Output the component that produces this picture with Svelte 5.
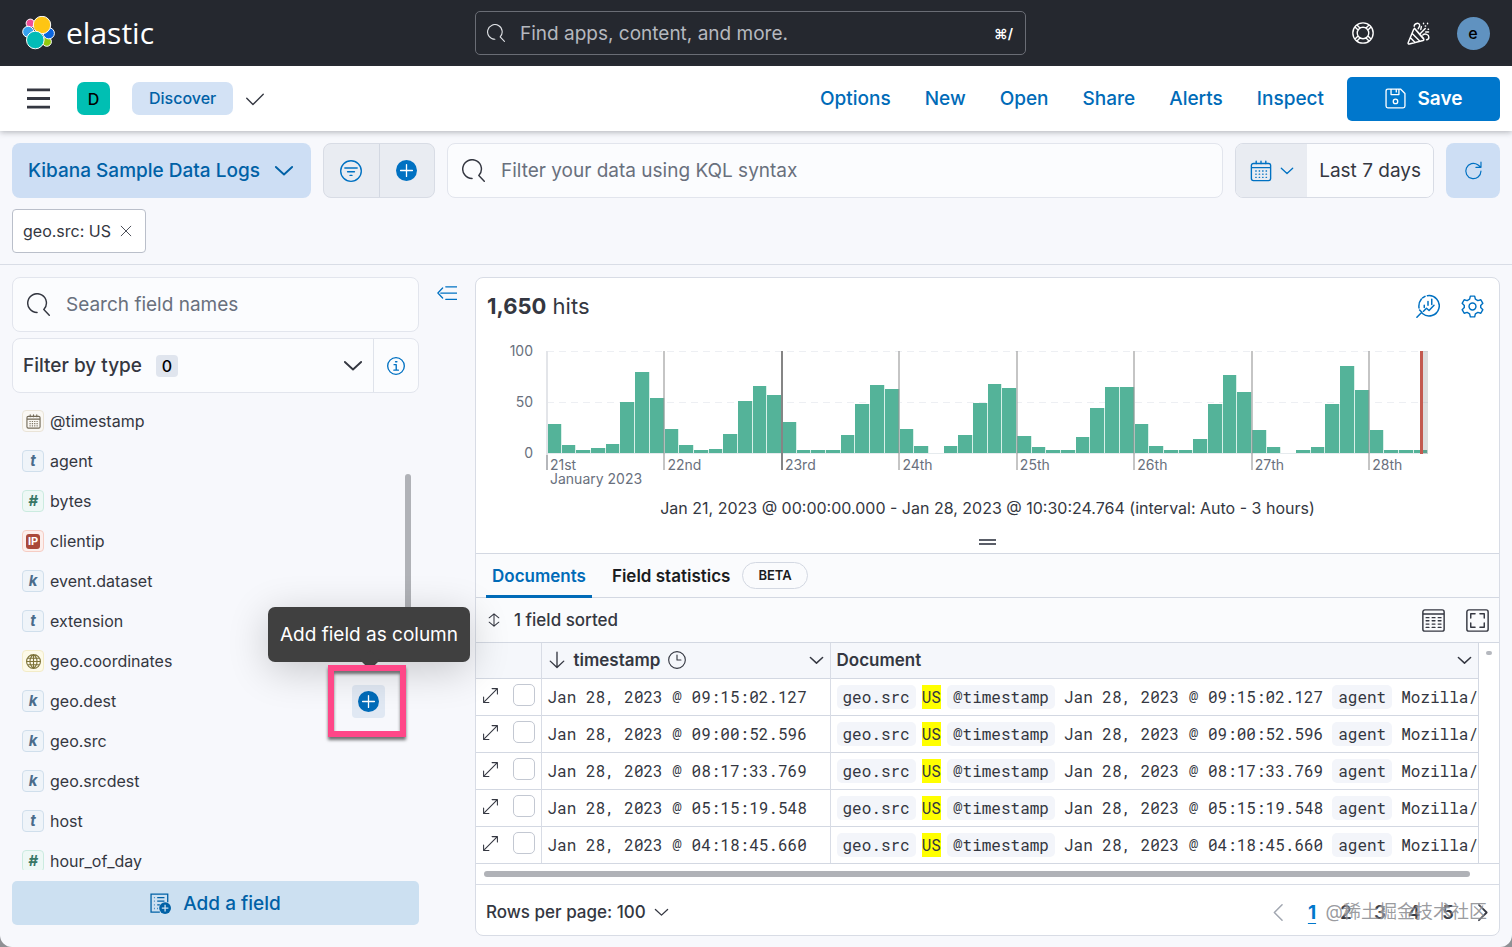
<script lang="ts">
  type Field = { name: string; type: 'date' | 'text' | 'number' | 'ip' | 'keyword' | 'geo' }

  const navLinks = ['Options', 'New', 'Open', 'Share', 'Alerts', 'Inspect']

  const fields: Field[] = [
    { name: '@timestamp', type: 'date' },
    { name: 'agent', type: 'text' },
    { name: 'bytes', type: 'number' },
    { name: 'clientip', type: 'ip' },
    { name: 'event.dataset', type: 'keyword' },
    { name: 'extension', type: 'text' },
    { name: 'geo.coordinates', type: 'geo' },
    { name: 'geo.dest', type: 'keyword' },
    { name: 'geo.src', type: 'keyword' },
    { name: 'geo.srcdest', type: 'keyword' },
    { name: 'host', type: 'text' },
    { name: 'hour_of_day', type: 'number' },
  ]
  const tokens: Record<string, string> = { text: 't', number: '#', keyword: 'k', ip: 'IP' }

  // One value per 3 hour bucket, 8 buckets per day.
  const buckets = [
    28, 8, 3, 5, 9, 50, 79, 54,
    24, 8, 3, 4, 19, 51, 66, 57,
    30, 3, 3, 3, 18, 48, 67, 63,
    24, 7, 0, 7, 18, 49, 68, 64,
    17, 6, 3, 3, 16, 44, 65, 65,
    28, 7, 3, 3, 14, 48, 76, 60,
    23, 6, 0, 3, 6, 48, 85, 62,
    23, 3, 3, 3,
  ]
  const days = ['21st', '22nd', '23rd', '24th', '25th', '26th', '27th', '28th']

  const rows = [
    'Jan 28, 2023 @ 09:15:02.127',
    'Jan 28, 2023 @ 09:00:52.596',
    'Jan 28, 2023 @ 08:17:33.769',
    'Jan 28, 2023 @ 05:15:19.548',
    'Jan 28, 2023 @ 04:18:45.660',
  ]

  let hovered = $state('geo.dest')
  let tab = $state('documents')
  let page = $state(1)

  // Stroked outlines on a 16x16 grid.
  const icons: Record<string, string> = {
    search: 'M7 13.5A6.5 6.5 0 1 1 11.7 11.5M11.7 11.5L15.5 15.5',
    menu: 'M0 2h16M0 8h16M0 14h16',
    check: 'M2 7.5l4.5 4.5L14 4.5',
    down: 'M1.5 4.8L8 10.8l6.5-6',
    left: 'M11 1.5L4.5 8l6.5 6.5',
    right: 'M5 1.5L11.5 8 5 14.5',
    cross: 'M2.5 2.5l11 11M13.5 2.5l-11 11',
    filter: 'M.5 8a7.5 7.5 0 1 0 15 0 7.5 7.5 0 1 0-15 0M3.5 5.8h9M5.5 8.5h5M7.3 11.2h1.4',
    calendar: 'M2.5 2.5h11a1.5 1.5 0 0 1 1.5 1.5v9.5a1.5 1.5 0 0 1-1.5 1.5h-11A1.5 1.5 0 0 1 1 13.5V4a1.5 1.5 0 0 1 1.5-1.5zM1 5.5h14M4.5.8v2M8 .8v2M11.5.8v2M4.2 8h.3M6.7 8h.3M9.200 8h.3M11.700 8h.3M4.200 10.300h.3M6.700 10.300h.3M9.200 10.300h.3M11.700 10.300h.3M4.200 12.600h.3M6.700 12.600h.3M9.200 12.600h.3M11.700 12.600h.3',
    refresh: 'M14.3 8.5A6.4 6.4 0 1 1 11.6 3.2L14 5M14.3 1v4.3H10',
    help: 'M.6 8a7.4 7.4 0 1 0 14.8 0A7.4 7.4 0 1 0 .6 8M3.8 8a4.2 4.2 0 1 0 8.4 0 4.2 4.2 0 1 0-8.4 0M2.2 3.6l2.2 2.2M3.6 2.2l2.2 2.2M13.8 3.6l-2.2 2.2M12.4 2.2l-2.2 2.2M2.2 12.4l2.2-2.2M3.6 13.8l2.2-2.2M13.8 12.4l-2.2-2.2M12.4 13.8l-2.2-2.2',
    cheer: 'M4.6 5.2L.8 14.4c-.2.6.2 1 .8.9l9.6-2.4c.6-.2.7-.7.3-1.1L5.7 5c-.4-.4-.9-.3-1.1.2zM3.6 8l5.2 5.2M2.4 11l3.2 3.2M5.2 4.4l6.4 7M5 3c0-2 3.400-3 3.800-.9.2 1-.6 1.600-1 2.600M9.500 7.800l3.200-3.200M9.600 5.200l.400-2M11 9c1.500-1.200 4.200-.4 4.200 1.600 0 1.200-.8 1.700-1.600 1.700M11.500.9v.3M14.300.9v.3M12.700 2.800h.3M14.700 5h.3M13 6.900h2',
    save: 'M2.200.8h9.600l3.400 3.400v9.600a1.400 1.400 0 0 1-1.400 1.400H2.200A1.400 1.400 0 0 1 .8 13.800V2.200A1.400 1.400 0 0 1 2.200.8zM4.600 1v4h6V1M8.600 1v2M6.300 10.200a1.700 1.700 0 1 0 3.400 0 1.700 1.700 0 1 0-3.400 0',
    lens: 'M7.600 1.100A6.800 6.800 0 1 1 4.300 13M.6 15.500L3.900 12.200 2.400 10.700M2 9.300c-.3-2.200.2-4.200 1.600-5.900M4.400 2.600L6 1.600M5.500 7.500V9M8 5v2.500M10.500 3.500V7M5 11.500l2-2 1.700 1.500 3.300-3.500',
    gear: 'M6.500.8h3l.5 2.100 1.700 1 2.100-.6 1.400 2.500L13.700 7.300v1.400l1.500 1.500-1.400 2.500-2.100-.6-1.700 1-.5 2.100h-3L6 13.100l-1.700-1-2.100.6L.8 10.200 2.300 8.700V7.300L.8 5.800l1.400-2.500 2.100.6 1.700-1zM5.600 8a2.400 2.400 0 1 0 4.800 0 2.400 2.400 0 1 0-4.800 0',
    info: 'M.6 8a7.400 7.400 0 1 0 14.800 0A7.400 7.400 0 1 0 .6 8M6.300 6.800h1.900v4.700M6.100 11.700h4M7.600 4.200h1.200',
    collapse: 'M7 3h9M3 8h13M7 13h9M4.500 4L.7 8l3.800 4',
    expand: 'M2.500 13.500l11-11M9.500 1.500h5v5M1.500 9.500v5h5',
    sortable: 'M8 1v14M2.500 5.500L8 1l5.500 4.500M2.500 10.500L8 15l5.500-4.500',
    sortDown: 'M8 1v13.500M2 9l6 5.700L14 9',
    clock: 'M.6 8a7.400 7.400 0 1 0 14.800 0A7.400 7.400 0 1 0 .6 8M8 3.500V8h3.500',
    table: 'M2 .6h12A1.400 1.400 0 0 1 15.400 2v12a1.400 1.400 0 0 1-1.400 1.400H2A1.400 1.400 0 0 1 .6 14V2A1.400 1.400 0 0 1 2 .6zM.6 3.500h14.800M2.900 6h1.900M7.100 6h1.900M11.300 6h1.900M2.900 8.200h1.900M7.100 8.200h1.900M11.300 8.200h1.900M2.900 10.500h1.900M7.100 10.500h1.900M11.300 10.500h1.900M2.900 12.800h1.900M7.100 12.800h1.900M11.300 12.800h1.900',
    full: 'M2 .6h12A1.400 1.400 0 0 1 15.400 2v12a1.400 1.400 0 0 1-1.400 1.400H2A1.400 1.400 0 0 1 .6 14V2A1.400 1.400 0 0 1 2 .6zM3.300 6.300v-3h3M9.700 3.300h3v3M12.700 9.700v3h-3M6.300 12.700h-3v-3',
    globe: 'M.6 8a7.400 7.400 0 1 0 14.800 0A7.400 7.400 0 1 0 .6 8M8 .6v14.800M.6 8h14.800M1.800 4.500h12.400M1.800 11.500h12.400M8 .6C3 4.500 3 11.500 8 15.400M8 .6c5 3.900 5 10.900 0 14.800',
    indexAdd: 'M7.500 14.500h-6.700V.8h12.700V7M3 3.500h.5M5.500 3.500h5.500M3 6.200h.5M5.500 6.200H11M3 9h.5M5.500 9h2M3 11.800h.5M5.500 11.800h.5',
  }
</script>

{#snippet icon(name: string, size = 22, weight = 1)}
  <svg width={size} height={size} viewBox="0 0 16 16" fill="none" stroke="currentColor" stroke-width={weight} stroke-linecap="round" stroke-linejoin="round" aria-hidden="true">
    <path d={icons[name]} />
  </svg>
{/snippet}

{#snippet plus(size = 21)}
  <svg width={size} height={size} viewBox="0 0 16 16" aria-hidden="true">
    <circle cx="8" cy="8" r="8" fill="currentColor" />
    <path d="M8 3.500v9M3.500 8h9" stroke="#fff" stroke-width="1" stroke-linecap="round" />
  </svg>
{/snippet}

<div class="app">
  <header class="top">
    <a class="brand" href="#home">
      <svg width="33" height="34" viewBox="0 0 33 34" aria-hidden="true">
        <g stroke="#fff" stroke-width="1">
          <circle cx="8.300" cy="7.300" r="4.200" fill="#f04e98" />
          <circle cx="24.800" cy="25.700" r="4.600" fill="#93c90e" />
          <circle cx="6.200" cy="15.800" r="5.500" fill="#36a2ef" />
          <circle cx="26.800" cy="17.300" r="5.600" fill="#0b64dd" />
          <circle cx="20" cy="9" r="8.700" fill="#fec514" />
          <circle cx="13.300" cy="24" r="8.800" fill="#02bcb7" />
        </g>
      </svg>
      <span>elastic</span>
    </a>
    <label class="find">
      {@render icon('search', 18)}
      <input type="text" placeholder="Find apps, content, and more." aria-label="Find apps, content, and more." />
      <kbd>⌘/</kbd>
    </label>
    <div class="top-right">
      <button aria-label="Help">{@render icon('help')}</button>
      <button aria-label="News">{@render icon('cheer', 23)}</button>
      <button aria-label="Account"><span class="avatar">e</span></button>
    </div>
  </header>

  <nav class="bar">
    <button class="plain" aria-label="Menu">{@render icon('menu', 23, 2)}</button>
    <button class="space">D</button>
    <a class="crumb" href="#discover">Discover</a>
    <span class="check">{@render icon('check')}</span>
    <div class="links">
      {#each navLinks as link}
        <a href="#{link.toLowerCase()}">{link}</a>
      {/each}
    </div>
    <button class="save">{@render icon('save', 21)} Save</button>
  </nav>

  <section class="query">
    <div class="query-row">
      <button class="dataview">Kibana Sample Data Logs {@render icon('down', 20, 1.500)}</button>
      <div class="group">
        <button aria-label="Saved queries">{@render icon('filter')}</button>
        <button aria-label="Add filter">{@render plus()}</button>
      </div>
      <label class="field kql">
        {@render icon('search', 23)}
        <input type="text" placeholder="Filter your data using KQL syntax" aria-label="Query" />
      </label>
      <div class="dates">
        <button class="quick" aria-label="Quick select">{@render icon('calendar')} {@render icon('down', 14, 1.500)}</button>
        <button class="range">Last 7 days</button>
      </div>
      <button class="refresh" aria-label="Refresh">{@render icon('refresh', 19)}</button>
    </div>
    <button class="chip">geo.src: US {@render icon('cross', 14)}</button>
  </section>

  <div class="body">
    <aside>
      <label class="field">
        {@render icon('search', 23)}
        <input type="text" placeholder="Search field names" aria-label="Search field names" />
      </label>
      <div class="types">
        <button class="type-btn">Filter by type <span class="count">0</span> {@render icon('down', 20, 1.500)}</button>
        <button class="type-info" aria-label="Field type help">{@render icon('info', 18, 1.200)}</button>
      </div>
      <ul class="fields">
        {#each fields as field}
          <li>
            <span class="token {field.type}">
              {#if field.type === 'date'}
                {@render icon('calendar', 15, 1.200)}
              {:else if field.type === 'geo'}
                {@render icon('globe', 15, 1.200)}
              {:else}
                <span>{tokens[field.type]}</span>
              {/if}
            </span>
            {field.name}
            {#if hovered === field.name}
              <span class="action">
                <button aria-label="Add field as column">{@render plus()}</button>
                <span class="tooltip" role="tooltip">Add field as column</span>
                <span class="marker"></span>
              </span>
            {/if}
          </li>
        {/each}
        <span class="thumb"></span>
      </ul>
      <button class="add">
        <svg width="21" height="21" viewBox="0 0 16 16" fill="none" stroke="currentColor" aria-hidden="true">
          <path d={icons.indexAdd} />
          <circle cx="11.500" cy="11.500" r="4.500" fill="currentColor" stroke="none" />
          <path d="M11.500 9v5M9 11.500h5" stroke="#cce0f1" />
        </svg>
        Add a field
      </button>
    </aside>

    <button class="collapse" aria-label="Collapse sidebar">{@render icon('collapse', 20)}</button>

    <main>
      <section class="hist">
        <div class="hist-head">
          <h1><strong>1,650</strong> hits</h1>
          <button aria-label="Edit visualization">{@render icon('lens', 24)}</button>
          <button aria-label="Chart options">{@render icon('gear', 23)}</button>
        </div>
        <div class="chart">
          <div class="y-axis"><span>100</span><span>50</span><span>0</span></div>
          <div class="plot">
            <div class="bars">
              {#each buckets as value}
                <i style:height="{value}%"></i>
              {/each}
            </div>
            <span class="rest"></span>
            <span class="now"></span>
            {#each days as day, i}
              <div class="day" class:first={i === 0} class:dark={i === 2} style:left="{(i * 800) / buckets.length}%">
                <span>{day}{#if i === 0}<br />January 2023{/if}</span>
              </div>
            {/each}
          </div>
        </div>
        <p class="interval">Jan 21, 2023 @ 00:00:00.000 - Jan 28, 2023 @ 10:30:24.764 (interval: Auto - 3 hours)</p>
        <button class="grip" aria-label="Resize chart"></button>
      </section>

      <div class="tabs">
        <button class:active={tab === 'documents'} onclick={() => (tab = 'documents')}>Documents</button>
        <button class:active={tab === 'stats'} onclick={() => (tab = 'stats')}>Field statistics</button>
        <span class="beta">BETA</span>
      </div>

      <div class="toolbar">
        <button class="sorted">{@render icon('sortable', 14, 1.200)} 1 field sorted</button>
        <button class="tool" aria-label="Display options">{@render icon('table', 23)}</button>
        <button class="tool" aria-label="Full screen">{@render icon('full', 23)}</button>
      </div>

      <div class="grid">
        <table>
          <thead>
            <tr>
              <th class="ctl"></th>
              <th class="ts"><div>{@render icon('sortDown', 18, 1.200)} <span>timestamp</span> {@render icon('clock', 18)} <span class="end">{@render icon('down', 15, 1.600)}</span></div></th>
              <th><div>Document <span class="end">{@render icon('down', 15, 1.600)}</span></div></th>
            </tr>
          </thead>
          <tbody>
            {#each rows as time}
              <tr>
                <td class="ctl">
                  <div>
                    <button class="plain" aria-label="Open document">{@render icon('expand', 17)}</button>
                    <input type="checkbox" aria-label="Select {time}" />
                  </div>
                </td>
                <td class="mono">{time}</td>
                <td class="mono">
                  <div class="source">
                    <b>geo.src</b><mark>US</mark><b>@timestamp</b><span>{time}</span><b>agent</b><span>Mozilla/</span>
                  </div>
                </td>
              </tr>
            {/each}
          </tbody>
        </table>
        <div class="gutter"><span></span></div>
      </div>
      <div class="hscroll"><span></span></div>

      <footer>
        <button class="per-page">Rows per page: 100 {@render icon('down', 15, 1.400)}</button>
        <div class="pages">
          <button class="prev" aria-label="Previous page">{@render icon('left', 19, 1.300)}</button>
          {#each [1, 2, 3, 4, 5] as n}
            <button class:active={page === n} onclick={() => (page = n)}>{n}</button>
          {/each}
          <button aria-label="Next page">{@render icon('right', 19, 1.500)}</button>
        </div>
        <span class="watermark">@稀土掘金技术社区</span>
      </footer>
    </main>
  </div>
</div>

<style>
  :global(body) { background: #8f9094; }

  .app {
    display: flex;
    flex-direction: column;
    height: 100vh;
    overflow: hidden;
    border-radius: 0 0 12px 12px;
    background: #f7f8fc;
    color: #343741;
    font-family: Inter, "Liberation Sans", sans-serif;
    font-size: 19px;
  }
  .app * { box-sizing: border-box; }
  svg { display: block; flex: none; }
  button, input { font: inherit; color: inherit; }
  button {
    display: flex;
    align-items: center;
    justify-content: center;
    padding: 0;
    border: 0;
    background: none;
    cursor: pointer;
    white-space: nowrap;
  }
  input[type='text'] {
    flex: 1;
    min-width: 0;
    padding: 0;
    border: 0;
    outline: 0;
    background: none;
  }
  input::placeholder { color: #69707d; opacity: 1; }
  a { text-decoration: none; }

  .top {
    display: grid;
    grid-template-columns: 453fr 551fr 469fr;
    align-items: center;
    flex: none;
    height: 66px;
    padding: 0 17px 0 22px;
    background: #25282f;
    color: #fff;
  }
  .brand {
    display: flex;
    align-items: center;
    gap: 11px;
    color: #fff;
    font: 30px/40px "Open Sans", "Noto Sans", sans-serif;
  }
  .find {
    display: flex;
    align-items: center;
    gap: 15px;
    height: 44px;
    padding: 0 12px 0 11px;
    border: 1px solid #6a6d75;
    border-radius: 5px;
    color: #dfe1e5;
  }
  .find input::placeholder { color: #b5b8bf; }
  .find kbd { color: #fff; font: 600 14px Inter, "DejaVu Sans", sans-serif; }
  .top-right { display: flex; justify-content: flex-end; gap: 11px; }
  .top-right button { width: 44px; height: 44px; }
  .avatar {
    width: 33px;
    height: 33px;
    border-radius: 50%;
    background: #6092c0;
    color: #000;
    font-size: 16px;
    font-weight: 500;
    line-height: 33px;
  }

  .bar {
    position: relative;
    display: flex;
    align-items: center;
    flex: none;
    height: 65px;
    padding: 0 12px 0 27px;
    background: #fff;
    box-shadow: 0 1px 6px rgba(60, 64, 75, 0.4);
  }
  .space {
    width: 33px;
    height: 33px;
    margin: 0 22px 0 27px;
    border-radius: 7px;
    background: #00bfb3;
    color: #000;
    font-size: 16px;
    font-weight: 500;
  }
  .crumb {
    padding: 0 17px;
    border-radius: 7px;
    background: #d3e2f5;
    color: #0061a6;
    font-size: 16px;
    font-weight: 500;
    line-height: 33px;
  }
  .check { margin-left: 11px; }
  .links { display: flex; gap: 34px; margin: 0 23px 0 auto; }
  .links a { color: #006bb8; font-weight: 500; }
  .save {
    gap: 12px;
    width: 153px;
    height: 44px;
    border-radius: 5px;
    background: #0077cc;
    color: #fff;
    font-weight: 600;
  }

  .query {
    flex: none;
    padding: 12px 12px 11px;
    border-bottom: 1px solid #d9dde6;
  }
  .query-row { display: flex; gap: 12px; height: 55px; margin-bottom: 11px; }
  .dataview {
    gap: 14px;
    padding: 0 17px 0 16px;
    border-radius: 8px;
    background: #cddef4;
    color: #0061a6;
    font-weight: 500;
  }
  .group, .dates, .types {
    display: flex;
    border: 1px solid #d8dce5;
    border-radius: 8px;
    overflow: hidden;
  }
  .group { background: #e9ecf2; color: #0071c2; }
  .group button { width: 55px; }
  .group button + button { border-left: 1px solid #d3d8e2; }
  .field {
    display: flex;
    align-items: center;
    gap: 16px;
    height: 55px;
    padding: 0 14px;
    border: 1px solid #e2e5ed;
    border-radius: 8px;
    background: #fbfcfe;
  }
  .kql { flex: 1; }
  .quick { gap: 8px; width: 71px; background: #e9ecf2; color: #0071c2; }
  .range { padding: 0 12px; background: #fbfcfe; }
  .refresh { width: 54px; border-radius: 8px; background: #cddef4; color: #0071c2; }
  .chip {
    gap: 8px;
    height: 44px;
    padding: 0 12px 0 10px;
    border: 1px solid #babfca;
    border-radius: 4px;
    background: #fff;
    font-size: 16px;
  }

  .body {
    display: flex;
    flex: 1;
    min-height: 0;
    padding: 12px 12px 11px;
  }
  aside { display: flex; flex-direction: column; flex: 0 0 407px; padding-bottom: 11px; }
  .types { flex: none; height: 55px; margin-top: 6px; background: #fbfcfe; border-color: #e2e5ed; }
  .type-btn { flex: 1; justify-content: flex-start; padding: 0 10px; font-weight: 500; }
  .type-btn > :global(svg) { margin-left: auto; }
  .count {
    width: 22px;
    margin-left: 14px;
    border-radius: 4px;
    background: #e0e5ee;
    color: #000;
    font-size: 16px;
    line-height: 22px;
  }
  .type-info { width: 45px; border-left: 1px solid #dfe3eb; color: #0071c2; }
  .fields {
    position: relative;
    flex: 1;
    min-height: 0;
    margin: 8px 0 11px;
    padding: 0 0 0 10px;
    overflow-y: clip;
    list-style: none;
    font-size: 16px;
  }
  .fields li { display: flex; align-items: center; gap: 6px; height: 40px; }
  .token {
    display: flex;
    align-items: center;
    justify-content: center;
    width: 22px;
    height: 22px;
    border: 1px solid;
    border-radius: 4px;
    font-size: 15px;
    font-weight: 700;
    font-style: italic;
    line-height: 20px;
  }
  .token.text, .token.keyword { border-color: #d0dfec; background: #eff4f9; color: #496c8c; }
  .token.number { border-color: #cbebe0; background: #eef8f5; color: #387765; }
  .token.ip { border-color: #f6cdc4; background: #fcefec; color: #fff; font-size: 11px; font-style: normal; }
  .token.ip span { padding: 0 2px; border-radius: 3px; background: #aa493a; line-height: 15px; }
  .token.date { border-color: #eae4d8; background: #faf8f4; color: #736a58; }
  .token.geo { border-color: #f3ecc8; background: #fdfae8; color: #7d7338; }
  .action { position: relative; margin: 0 34px 0 auto; }
  .action button { width: 33px; height: 33px; border-radius: 4px; background: #e0e8f3; color: #006bb8; }
  .tooltip {
    position: absolute;
    right: -85px;
    bottom: 56px;
    padding: 0 12px;
    border-radius: 7px;
    background: #404040;
    box-shadow: 0 8px 40px rgba(0, 0, 0, 0.2);
    color: #fff;
    font-size: 19px;
    line-height: 55px;
    white-space: nowrap;
  }
  .tooltip::after {
    content: '';
    position: absolute;
    right: 93px;
    bottom: -5px;
    width: 14px;
    height: 14px;
    border-radius: 2px;
    background: #404040;
    transform: rotate(45deg);
  }
  .marker {
    position: absolute;
    inset: -20px -21px -19px -24px;
    border: 6px solid #ff4788;
    box-shadow: 0 3px 3px rgba(0, 0, 0, 0.55), inset 0 3px 3px rgba(0, 0, 0, 0.5);
    pointer-events: none;
  }
  .fields .thumb {
    position: absolute;
    top: 73px;
    right: 8px;
    width: 6px;
    height: 150px;
    border-radius: 3px;
    background: #b0b2b7;
  }
  .fields li { position: relative; }
  .fields li:has(.action) { z-index: 2; }
  .add {
    flex: none;
    gap: 12px;
    height: 44px;
    border-radius: 5px;
    background: #cce0f1;
    color: #0061a6;
    font-weight: 500;
  }
  .collapse { width: 56px; height: 32px; flex: none; color: #0071c2; }

  main {
    display: flex;
    flex-direction: column;
    flex: 1;
    min-width: 0;
    border: 1px solid #d8dce5;
    border-radius: 8px;
    background: #fff;
    overflow: hidden;
  }
  .hist { position: relative; flex: none; height: 276px; border-bottom: 1px solid #d3d8e2; }
  .hist-head { display: flex; align-items: center; height: 56px; padding: 0 5px 0 11px; }
  .hist-head h1 { margin: 0 auto 0 0; font-size: 22px; font-weight: 400; }
  .hist-head button { width: 44px; color: #0071c2; }
  .chart {
    display: flex;
    height: 145px;
    padding: 17px 71px 0 0;
    color: #69707d;
    font-size: 14px;
    line-height: 14px;
  }
  .y-axis {
    display: flex;
    flex-direction: column;
    justify-content: space-between;
    flex: 0 0 71px;
    height: 116px;
    margin-top: -7px;
    padding-right: 14px;
    text-align: right;
  }
  .plot {
    position: relative;
    flex: 1;
    height: 103px;
    background:
      repeating-linear-gradient(90deg, #edeff3 0 7px, transparent 7px 12px) 0 0 / 100% 1px no-repeat,
      repeating-linear-gradient(90deg, #edeff3 0 7px, transparent 7px 12px) 0 50% / 100% 1px no-repeat;
  }
  .bars { display: flex; align-items: flex-end; height: 100%; border-bottom: 1px solid #e6ebee; }
  .bars i { flex: 1; border-right: 1px solid #d8f0e8; background: #54b399; }
  .day { position: absolute; top: 0; height: 119px; margin-left: -1px; border-left: 2px solid rgba(150, 150, 150, 0.55); }
  .day.first { border-image: linear-gradient(#e3e5e9 87%, #b5b7bb 87%) 1; }
  .day.dark { border-color: #858585; }
  .day span { display: block; margin-top: 107px; padding-left: 2px; white-space: nowrap; }
  .rest { position: absolute; top: 0; bottom: 0; right: 0; width: 7px; background: rgba(120, 120, 120, 0.25); }
  .now { position: absolute; top: 0; bottom: 0; right: 5px; width: 3px; background: #c3594f; }
  .interval { margin: 18px 0 0; text-align: center; font-size: 16px; line-height: 22px; }
  .grip {
    width: 17px;
    height: 6px;
    margin: 20px auto 0;
    border: solid #5a5e68;
    border-width: 2px 0;
  }

  .tabs {
    display: flex;
    align-items: center;
    flex: none;
    height: 44px;
    padding-left: 10px;
    border-bottom: 1px solid #d3d8e2;
    background: #fafbfd;
    color: #1a1c21;
    font-size: 17px;
    font-weight: 600;
  }
  .tabs button { height: 44px; margin-right: 14px; padding: 0 6px; border-bottom: 3px solid transparent; border-top: 3px solid transparent; }
  .tabs button.active { border-bottom-color: #006bb8; color: #006bb8; }
  .beta {
    margin-left: -8px;
    padding: 0 15px;
    border: 1px solid #d3d8e2;
    border-radius: 14px;
    font-size: 13px;
    line-height: 25px;
  }

  .toolbar {
    display: flex;
    align-items: center;
    flex: none;
    height: 45px;
    padding: 0 0 0 11px;
    border-bottom: 1px solid #d3d8e2;
    background: #fafbfd;
  }
  .sorted { gap: 13px; margin-right: auto; font-size: 17px; font-weight: 500; }
  .tool { width: 44px; height: 44px; }

  .grid { display: flex; flex: none; border-bottom: 1px solid #d3d8e2; }
  table { flex: 1; min-width: 0; width: 0; border-collapse: collapse; table-layout: fixed; }
  th, td { height: 37px; padding: 0 6px; overflow: hidden; text-align: left; }
  th { height: 35px; background: #f5f7fb; font-size: 17px; font-weight: 600; }
  th + th, td + td { border-left: 1px solid #d8dce5; }
  tbody tr { border-top: 1px solid #d3d8e2; }
  .ctl { width: 65px; }
  .ts { width: 289px; }
  th > div, .ctl > div { display: flex; align-items: center; gap: 8px; }
  .end { margin-left: auto; }
  .ctl > div { gap: 14px; padding-bottom: 3px; }
  .ctl input {
    flex: none;
    appearance: none;
    width: 22px;
    height: 22px;
    margin: 0;
    border: 1px solid #c3c8d2;
    border-radius: 5px;
    background: #fff;
  }
  .mono { font: 16px/24px "Roboto Mono", "DejaVu Sans Mono", monospace; white-space: nowrap; }
  .source { display: flex; gap: 8px; }
  .source b { margin-right: -2px; padding: 0 6px; border-radius: 5px; background: #f3f5fa; font-weight: 400; }
  .source b:not(:first-child) { margin-left: -2px; }
  .source mark { background: #ff0; color: inherit; }
  .source span { margin: 0 3px; }
  .gutter { flex: 0 0 21px; border-left: 1px solid #d3d8e2; }
  .gutter span { display: block; width: 6px; height: 4px; margin: 8px auto; border-radius: 2px; background: #b5b8be; }
  .hscroll { flex: none; padding: 7px 29px 7px 8px; border-bottom: 1px solid #d8dce5; }
  .hscroll span { display: block; height: 6px; border-radius: 3px; background: #b0b2b7; }

  footer {
    position: relative;
    display: flex;
    align-items: center;
    justify-content: space-between;
    flex: 1;
    min-height: 44px;
    padding: 4px 0 0 10px;
  }
  .per-page { gap: 8px; font-size: 17px; font-weight: 500; }
  .pages { display: flex; font-size: 19px; font-weight: 600; }
  .pages button { width: 34px; }
  .pages .prev { color: #a2a7b1; }
  .pages .active { color: #0077cc; font-weight: 700; text-decoration: underline; text-underline-offset: 4px; }
  .watermark {
    position: absolute;
    right: 12px;
    color: rgba(110, 112, 118, 0.7);
    font: 18px/24px Inter, "Noto Sans CJK SC", sans-serif;
    text-shadow: 0 0 2px #fff;
    pointer-events: none;
  }
</style>
